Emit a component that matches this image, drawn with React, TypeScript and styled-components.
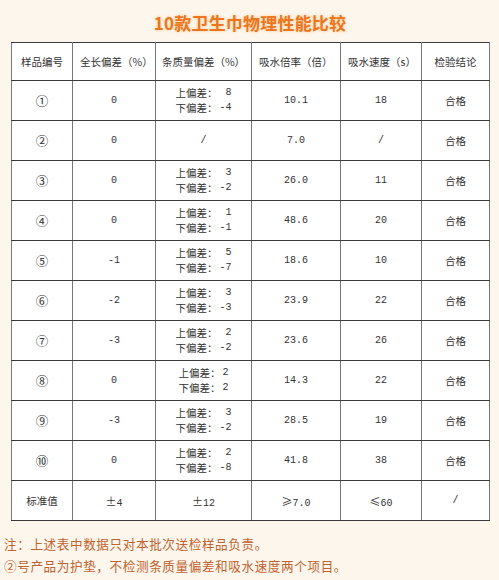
import styled, { createGlobalStyle } from "styled-components";

const GlobalStyle = createGlobalStyle`
  html, body {
    margin: 0;
    padding: 0;
    background: #fdf6ec;
  }
  body {
    font-family: "Noto Sans CJK SC", "Noto Sans", sans-serif;
  }
`;

const Page = styled.div`
  width: 499px;
  height: 580px;
  box-sizing: border-box;
  padding: 0 10px 0 11px;
  background: #fdf6ec;
  overflow: hidden;
`;

const Title = styled.h1`
  margin: 0;
  height: 42px;
  line-height: 46px;
  text-align: center;
  font-size: 17px;
  font-weight: 700;
  color: #ea761f;
  text-shadow: 0 0 3px rgba(255, 190, 120, 0.8);
  letter-spacing: 0.2px;
`;

const Table = styled.table`
  width: 478px;
  border-collapse: collapse;
  table-layout: fixed;
  background: #fff;
  border: 1.5px solid #3a3a3a;
`;

const HeadCell = styled.th<{ $align?: string }>`
  height: 37px;
  padding: 0 0 0 ${(p) => (p.$align === "left" ? "7px" : "0")};
  text-align: ${(p) => p.$align || "center"};
  font-size: 10.5px;
  font-weight: 400;
  color: #333;
  border: 1.5px solid #555;
  border-color: #3a3a3a #777 #3a3a3a #777;
`;

const Cell = styled.td`
  height: 39px;
  padding: 0;
  text-align: center;
  font-size: 10px;
  color: #333;
  font-family: "Liberation Mono", "Noto Sans CJK SC", monospace;
  border: 1.5px solid #555;
  border-color: #3a3a3a #777 #3a3a3a #777;
`;

const CjkText = styled.span<{ $size?: number }>`
  font-family: "Noto Sans CJK SC", sans-serif;
  font-size: ${(p) => p.$size || 10.5}px;
`;

const Deviation = styled.div`
  display: inline-grid;
  grid-template-columns: auto auto;
  column-gap: 2px;
  row-gap: 1px;
  line-height: 14px;
  text-align: right;
  span:nth-child(odd) {
    font-family: "Noto Sans CJK SC", sans-serif;
    font-size: 10.5px;
    text-align: left;
  }
`;

const Notes = styled.div`
  margin: 12px 0 0 -7px;
  font-size: 12.6px;
  color: #c2622e;
  letter-spacing: 0.6px;
  line-height: 22px;
`;

type Row = {
  id: string;
  len: string;
  dev: [string, string] | null;
  rate: string;
  speed: string;
};

const rows: Row[] = [
  { id: "①", len: "0", dev: ["8", "-4"], rate: "10.1", speed: "18" },
  { id: "②", len: "0", dev: null, rate: "7.0", speed: "/" },
  { id: "③", len: "0", dev: ["3", "-2"], rate: "26.0", speed: "11" },
  { id: "④", len: "0", dev: ["1", "-1"], rate: "48.6", speed: "20" },
  { id: "⑤", len: "-1", dev: ["5", "-7"], rate: "18.6", speed: "10" },
  { id: "⑥", len: "-2", dev: ["3", "-3"], rate: "23.9", speed: "22" },
  { id: "⑦", len: "-3", dev: ["2", "-2"], rate: "23.6", speed: "26" },
  { id: "⑧", len: "0", dev: ["2", "2"], rate: "14.3", speed: "22" },
  { id: "⑨", len: "-3", dev: ["3", "-2"], rate: "28.5", speed: "19" },
  { id: "⑩", len: "0", dev: ["2", "-8"], rate: "41.8", speed: "38" },
];

export default function App() {
  return (
    <>
      <GlobalStyle />
      <Page>
        <Title>10款卫生巾物理性能比较</Title>
        <Table>
          <colgroup>
            <col style={{ width: 61 }} />
            <col style={{ width: 83 }} />
            <col style={{ width: 96 }} />
            <col style={{ width: 89 }} />
            <col style={{ width: 81 }} />
            <col style={{ width: 68 }} />
          </colgroup>
          <thead>
            <tr>
              <HeadCell>样品编号</HeadCell>
              <HeadCell $align="left">全长偏差（%）</HeadCell>
              <HeadCell>条质量偏差（%）</HeadCell>
              <HeadCell $align="left">吸水倍率（倍）</HeadCell>
              <HeadCell $align="left">吸水速度（s）</HeadCell>
              <HeadCell>检验结论</HeadCell>
            </tr>
          </thead>
          <tbody>
            {rows.map((r) => (
              <tr key={r.id}>
                <Cell>
                  <CjkText $size={12.5}>{r.id}</CjkText>
                </Cell>
                <Cell>{r.len}</Cell>
                <Cell>
                  {r.dev ? (
                    <Deviation>
                      <span>上偏差：</span>
                      <span>{r.dev[0]}</span>
                      <span>下偏差：</span>
                      <span>{r.dev[1]}</span>
                    </Deviation>
                  ) : (
                    "/"
                  )}
                </Cell>
                <Cell>{r.rate}</Cell>
                <Cell>{r.speed}</Cell>
                <Cell>
                  <CjkText>合格</CjkText>
                </Cell>
              </tr>
            ))}
            <tr>
              <Cell>
                <CjkText>标准值</CjkText>
              </Cell>
              <Cell>
                <CjkText $size={11}>±</CjkText>4
              </Cell>
              <Cell>
                <CjkText $size={11}>±</CjkText>12
              </Cell>
              <Cell>
                <CjkText $size={11}>≥</CjkText>7.0
              </Cell>
              <Cell>
                <CjkText $size={11}>≤</CjkText>60
              </Cell>
              <Cell>/</Cell>
            </tr>
          </tbody>
        </Table>
        <Notes>
          <div>注：上述表中数据只对本批次送检样品负责。</div>
          <div>②号产品为护垫，不检测条质量偏差和吸水速度两个项目。</div>
        </Notes>
      </Page>
    </>
  );
}
